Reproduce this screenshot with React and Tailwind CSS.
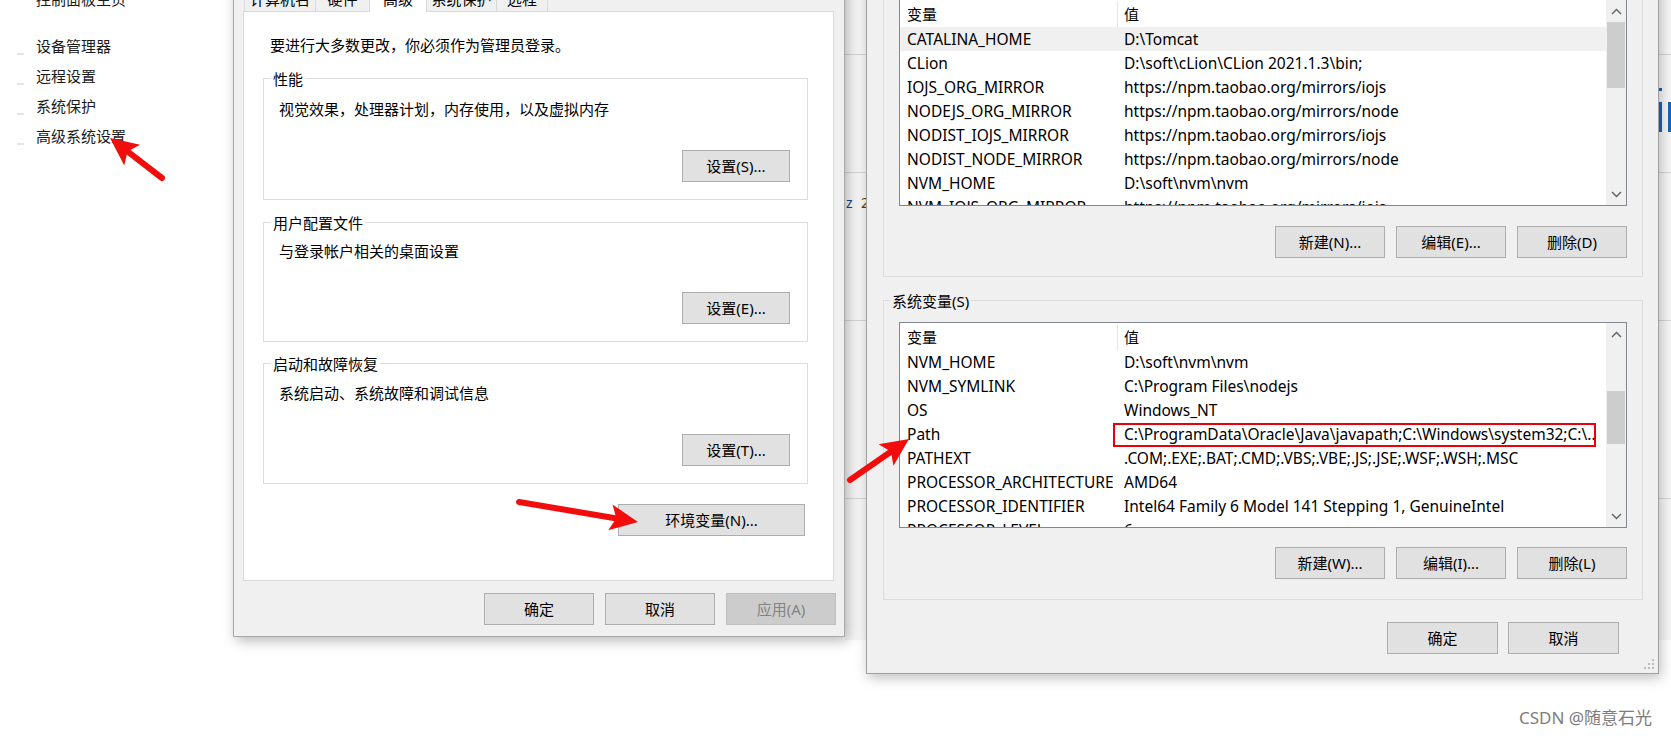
import React from "react";

const userVars = [
  ["CATALINA_HOME", "D:\\Tomcat"],
  ["CLion", "D:\\soft\\cLion\\CLion 2021.1.3\\bin;"],
  ["IOJS_ORG_MIRROR", "https://npm.taobao.org/mirrors/iojs"],
  ["NODEJS_ORG_MIRROR", "https://npm.taobao.org/mirrors/node"],
  ["NODIST_IOJS_MIRROR", "https://npm.taobao.org/mirrors/iojs"],
  ["NODIST_NODE_MIRROR", "https://npm.taobao.org/mirrors/node"],
  ["NVM_HOME", "D:\\soft\\nvm\\nvm"],
  ["NVM_IOJS_ORG_MIRROR", "https://npm.taobao.org/mirrors/iojs"],
];

const sysVars = [
  ["NVM_HOME", "D:\\soft\\nvm\\nvm"],
  ["NVM_SYMLINK", "C:\\Program Files\\nodejs"],
  ["OS", "Windows_NT"],
  ["Path", "C:\\ProgramData\\Oracle\\Java\\javapath;C:\\Windows\\system32;C:\\..."],
  ["PATHEXT", ".COM;.EXE;.BAT;.CMD;.VBS;.VBE;.JS;.JSE;.WSF;.WSH;.MSC"],
  ["PROCESSOR_ARCHITECTURE", "AMD64"],
  ["PROCESSOR_IDENTIFIER", "Intel64 Family 6 Model 141 Stepping 1, GenuineIntel"],
  ["PROCESSOR_LEVEL", "6"],
];

const tabs = [
  { label: "计算机名", w: "w-[72px]" },
  { label: "硬件", w: "w-[55px]" },
  { label: "高级", w: "w-[58px]", sel: true },
  { label: "系统保护", w: "w-[71px]" },
  { label: "远程", w: "w-[52px]" },
];

function Btn({ children, className = "", disabled = false }) {
  return (
    <div
      className={`flex h-[32px] items-center justify-center border leading-[20px] ${
        disabled
          ? "border-[#bfbfbf] bg-[#cccccc] text-[#838383]"
          : "border-[#adadad] bg-[#e1e1e1] text-black"
      } ${className}`}
    >
      {children}
    </div>
  );
}

function Group({ label, className = "", labelBg = "bg-white", labelLeft = "left-[7px]", children }) {
  return (
    <div className={`relative border border-[#dcdcdc] ${className}`}>
      {label && (
        <span className={`absolute top-[-10px] px-[2px] leading-[20px] ${labelLeft} ${labelBg}`}>{label}</span>
      )}
      {children}
    </div>
  );
}

function Chevron({ up }) {
  return (
    <svg width="11" height="7" viewBox="0 0 11 7">
      <polyline
        points={up ? "1,6 5.5,1.5 10,6" : "1,1 5.5,5.5 10,1"}
        fill="none"
        stroke="#606060"
        strokeWidth="1.4"
      />
    </svg>
  );
}

function Scroll({ thumb }) {
  return (
    <div className="flex w-[20px] flex-col bg-[#f0f0f0]">
      <div className="flex h-[22px] items-center justify-center">
        <Chevron up />
      </div>
      <div className="flex-1">
        <div className={`mx-[1px] bg-[#cdcdcd] ${thumb}`} />
      </div>
      <div className="flex h-[22px] items-center justify-center">
        <Chevron />
      </div>
    </div>
  );
}

function VarList({ rows, height, thumb, selected = -1, marked = -1 }) {
  return (
    <div className={`flex border border-[#828790] bg-white ${height}`}>
      <div className="flex-1 overflow-hidden">
        <div className="flex h-[27px] items-end">
          <div className="flex h-[25px] w-[218px] items-center border-r border-[#e5e5e5] pl-[7px]">变量</div>
          <div className="flex h-[25px] items-center pl-[6px]">值</div>
        </div>
        {rows.map(([k, v], i) => (
          <div
            key={k + i}
            className={`relative flex h-[24px] items-center whitespace-nowrap text-[15.5px] leading-[20px] ${
              i === selected ? "bg-[#f0f0f0]" : ""
            }`}
          >
            <div className="w-[218px] shrink-0 overflow-hidden pl-[7px]">{k}</div>
            <div className="flex-1 overflow-hidden pl-[6px]">
              {i === marked ? <div className="w-[470px] overflow-hidden">{v}</div> : v}
            </div>
            {i === marked && (
              <div className="absolute left-[213px] top-[1px] h-[24px] w-[483px] border-2 border-[#e8000b]" />
            )}
          </div>
        ))}
      </div>
      <Scroll thumb={thumb} />
    </div>
  );
}

function Arrow({ x1, y1, x2, y2 }) {
  const dx = x2 - x1;
  const dy = y2 - y1;
  const len = Math.hypot(dx, dy);
  const ux = dx / len;
  const uy = dy / len;
  const hl = 28;
  const hw = 13;
  const bx = x2 - ux * hl;
  const by = y2 - uy * hl;
  const px = -uy;
  const py = ux;
  const pts = [
    [x2, y2],
    [bx + px * hw, by + py * hw],
    [bx + ux * 6, by + uy * 6],
    [bx - px * hw, by - py * hw],
  ]
    .map((p) => p.join(","))
    .join(" ");
  return (
    <g>
      <line x1={x1} y1={y1} x2={bx + ux * 8} y2={by + uy * 8} stroke="#f20d0d" strokeWidth="6" strokeLinecap="round" />
      <polygon points={pts} fill="#f20d0d" />
    </g>
  );
}

const leftLinks = ["设备管理器", "远程设置", "系统保护", "高级系统设置"];

export default function App() {
  return (
    <div className="relative h-[736px] w-[1671px] overflow-hidden bg-white font-['Noto_Sans','Noto_Sans_CJK_SC',sans-serif] text-[15px] text-black">
      {/* control panel side list */}
      <div className="mt-[-16px] text-[#1b1b1b]">
        <div className="h-[30px] pl-[36px] leading-[30px]">控制面板主页</div>
        <div className="mt-[17px]">
          {leftLinks.map((l) => (
            <div key={l} className="flex h-[30px] items-end leading-[30px]">
              <span className="mb-[6px] ml-[17px] h-[2px] w-[7px] bg-[#e4e4e4]" />
              <span className="ml-[12px]">{l}</span>
            </div>
          ))}
        </div>
      </div>

      {/* partially hidden window behind */}
      <div className="absolute left-[845px] top-0 h-[640px] w-[826px] bg-[#f6f6f6]">
        <div className="h-[55px] border-b border-[#d4d4d4]" />
        <div className="h-[118px] border-b border-[#d4d4d4]" />
        <div className="h-[148px] border-b border-[#d4d4d4]" />
        <div className="h-[178px] border-b border-[#d4d4d4]" />
        <span className="absolute left-[1px] top-[192px] text-[14px] text-[#1c3f7a]">z</span>
        <span className="absolute left-[16px] top-[192px] text-[14px] text-[#5a3a10]">2</span>
        <div className="absolute left-[814px] top-[88px] h-[3px] w-[3px] bg-[#1565c0]" />
        <div className="absolute left-[814px] top-[102px] h-[30px] w-[3px] bg-[#1565c0]" />
        <div className="absolute left-[823px] top-[102px] h-[30px] w-[3px] bg-[#1565c0]" />
      </div>

      {/* system properties dialog */}
      <div className="absolute left-[233px] top-[-24px] h-[661px] w-[612px] border border-[#a8a8a8] bg-[#f0f0f0] shadow-[3px_4px_12px_rgba(0,0,0,0.28)]">
        <div className="flex h-[34px] pl-[10px]">
          {tabs.map((t, i) => (
            <div
              key={t.label}
              className={`flex justify-center border border-b-0 border-[#d9d9d9] pt-[11px] leading-[20px] ${
                i > 0 ? "-ml-[1px]" : ""
              } ${t.sel ? "relative z-10 h-[35px] bg-white" : "h-[34px] bg-[#f0f0f0]"} ${t.w}`}
            >
              {t.label}
            </div>
          ))}
        </div>
        <div className="ml-[9px] flex h-[570px] w-[591px] flex-col border border-[#d9d9d9] bg-white">
          <p className="ml-[26px] mt-[23px] leading-[20px]">要进行大多数更改，你必须作为管理员登录。</p>

          <Group label="性能" className="ml-[19px] mt-[23px] flex h-[122px] w-[545px] flex-col">
            <p className="pl-[15px] pt-[20px] leading-[20px]">视觉效果，处理器计划，内存使用，以及虚拟内存</p>
            <Btn className="mb-[17px] mr-[17px] mt-auto w-[108px] self-end">设置(S)...</Btn>
          </Group>

          <Group label="用户配置文件" className="ml-[19px] mt-[22px] flex h-[120px] w-[545px] flex-col">
            <p className="pl-[15px] pt-[18px] leading-[20px]">与登录帐户相关的桌面设置</p>
            <Btn className="mb-[17px] mr-[17px] mt-auto w-[108px] self-end">设置(E)...</Btn>
          </Group>

          <Group label="启动和故障恢复" className="ml-[19px] mt-[21px] flex h-[121px] w-[545px] flex-col">
            <p className="pl-[15px] pt-[19px] leading-[20px]">系统启动、系统故障和调试信息</p>
            <Btn className="mb-[17px] mr-[17px] mt-auto w-[108px] self-end">设置(T)...</Btn>
          </Group>

          <Btn className="mr-[28px] mt-[20px] w-[187px] self-end">环境变量(N)...</Btn>
        </div>
        <div className="mt-[12px] flex justify-end gap-[11px] pr-[8px]">
          <Btn className="w-[110px]">确定</Btn>
          <Btn className="w-[110px]">取消</Btn>
          <Btn className="w-[110px]" disabled>
            应用(A)
          </Btn>
        </div>
      </div>

      {/* environment variables dialog */}
      <div className="absolute left-[866px] top-[-30px] h-[704px] w-[793px] border border-[#a0a0a0] bg-[#f0f0f0] pl-[16px] pr-[15px] shadow-[2px_4px_12px_rgba(0,0,0,0.25)]">
        <Group className="mt-[8px] px-[15px] pb-[18px] pt-[19px]">
          <VarList rows={userVars} height="h-[207px]" thumb="h-[66px]" selected={0} />
          <div className="mt-[20px] flex justify-end gap-[11px]">
            <Btn className="w-[110px]">新建(N)...</Btn>
            <Btn className="w-[110px]">编辑(E)...</Btn>
            <Btn className="w-[110px]">删除(D)</Btn>
          </div>
        </Group>

        <Group
          label="系统变量(S)"
          className="mt-[23px] px-[15px] pb-[20px] pt-[21px]"
          labelBg="bg-[#f0f0f0]"
          labelLeft="left-[6px]"
        >
          <VarList rows={sysVars} height="h-[206px]" thumb="mt-[46px] h-[53px]" marked={3} />
          <div className="mt-[19px] flex justify-end gap-[11px]">
            <Btn className="w-[110px]">新建(W)...</Btn>
            <Btn className="w-[110px]">编辑(I)...</Btn>
            <Btn className="w-[110px]">删除(L)</Btn>
          </div>
        </Group>

        <div className="mt-[22px] flex justify-end gap-[10px] pr-[24px]">
          <Btn className="w-[111px]">确定</Btn>
          <Btn className="w-[111px]">取消</Btn>
        </div>

        <svg className="absolute bottom-[3px] right-[3px]" width="12" height="12" viewBox="0 0 12 12">
          <rect x="9" y="1" width="2" height="2" fill="#bdbdbd" />
          <rect x="5" y="5" width="2" height="2" fill="#bdbdbd" />
          <rect x="9" y="5" width="2" height="2" fill="#bdbdbd" />
          <rect x="1" y="9" width="2" height="2" fill="#bdbdbd" />
          <rect x="5" y="9" width="2" height="2" fill="#bdbdbd" />
          <rect x="9" y="9" width="2" height="2" fill="#bdbdbd" />
        </svg>
      </div>

      {/* annotation arrows */}
      <svg className="pointer-events-none absolute inset-0" width="1671" height="736">
        <Arrow x1={162} y1={178} x2={110} y2={138} />
        <Arrow x1={519} y1={502} x2={638} y2={522} />
        <Arrow x1={850} y1={480} x2={909} y2={439} />
      </svg>

      <div className="absolute left-[1519px] top-[706px] text-[17px] leading-[24px] text-[#7d7d7d]">CSDN @随意石光</div>
    </div>
  );
}
